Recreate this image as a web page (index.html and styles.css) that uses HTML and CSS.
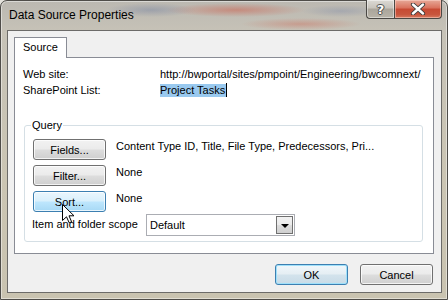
FILE: index.html
```html
<!DOCTYPE html>
<html lang="en">
<head>
  <meta charset="UTF-8" />
  <title>Data Source Properties</title>
  <link rel="stylesheet" href="styles.css">
</head>
<body>
  <div class="window">
    <div class="titlebar">
      <span class="title">Data Source Properties</span>
      <div class="caption-buttons">
        <div class="cap help">?</div>
        <div class="cap close">
          <svg width="16" height="12" viewBox="0 0 16 12">
            <path d="M3 1.5 L13 10.5 M13 1.5 L3 10.5" stroke="#3a3a3a" stroke-width="4.2" stroke-linecap="round" />
            <path d="M3 1.5 L13 10.5 M13 1.5 L3 10.5" stroke="#fff" stroke-width="2.4" stroke-linecap="round" />
          </svg>
        </div>
      </div>
    </div>

    <div class="client">
      <div class="tabs">
        <div class="tab">Source</div>
      </div>
      <div class="panel">
        <div class="prop">
          <span class="key">Web site:</span>
          <span class="val">http://bwportal/sites/pmpoint/Engineering/bwcomnext/</span>
        </div>
        <div class="prop">
          <span class="key">SharePoint List:</span>
          <span class="val"><span class="selected">Project Tasks</span><span class="caret"></span></span>
        </div>

        <fieldset class="query">
          <legend>Query</legend>
          <div class="qrow">
            <button class="btn">Fields...</button>
            <span class="qtext">Content Type ID, Title, File Type, Predecessors, Pri...</span>
          </div>
          <div class="qrow">
            <button class="btn">Filter...</button>
            <span class="qtext">None</span>
          </div>
          <div class="qrow">
            <button class="btn hover">Sort...</button>
            <span class="qtext">None</span>
          </div>
          <div class="scope">
            <span class="scope-label">Item and folder scope</span>
            <div class="combo">
              <span class="combo-text">Default</span>
              <span class="combo-arrow"></span>
            </div>
          </div>
        </fieldset>
      </div>

      <div class="actions">
        <button class="btn default">OK</button>
        <button class="btn">Cancel</button>
      </div>
    </div>

    <!-- mouse pointer over the Sort button -->
    <svg class="pointer" width="13" height="20" viewBox="0 0 13 20">
      <path d="M0.5 0.5 L0.5 16.5 L4.5 12.8 L7.2 18.8 L9.6 17.8 L7 11.8 L12 11.8 Z" fill="#fff" stroke="#000" stroke-width="1" stroke-linejoin="round" />
    </svg>
  </div>
</body>
</html>
```

FILE: styles.css
```css
* {
  box-sizing: border-box;
}
body {
  margin: 0;
  width: 448px;
  height: 300px;
  overflow: hidden;
  background: #e4e2dc;
  font-family: "Liberation Sans", Arial, sans-serif;
  font-size: 11px;
  color: #000;
}
.window {
  position: relative;
  width: 448px;
  height: 300px;
  display: flex;
  flex-direction: column;
  padding: 0 5px 6px 6px;
  border: 1px solid #4f4d49;
  border-radius: 7px 7px 0 0;
  background:
    radial-gradient(ellipse 70px 7px at 235px 9px, rgba(205, 80, 60, 0.45), transparent),
    radial-gradient(ellipse 60px 6px at 300px 23px, rgba(205, 90, 70, 0.35), transparent),
    radial-gradient(ellipse 45px 7px at 150px 9px, rgba(80, 100, 150, 0.3), transparent),
    radial-gradient(ellipse 40px 6px at 340px 10px, rgba(90, 110, 160, 0.25), transparent),
    linear-gradient(#bbb8b1, #c6c2b7 30px, #cbc5b3 60%, #c9c3b0);
  box-shadow: inset 0 0 0 1px rgba(255, 255, 255, 0.45);
}
.titlebar {
  height: 29px;
  display: flex;
  justify-content: space-between;
  align-items: flex-start;
}
.title {
  padding: 6px 0 0 2px;
  line-height: 16px;
  font-size: 12px;
  color: #000;
}
.caption-buttons {
  display: flex;
  margin: -1px 0 0 0;
}
.cap {
  height: 19px;
  display: flex;
  align-items: center;
  justify-content: center;
  border: 1px solid #4a4844;
  border-top: none;
}
.help {
  width: 28px;
  border-radius: 0 0 0 4px;
  border-right: none;
  background: linear-gradient(#dcdad5, #c7c3bb 45%, #aaa59b 50%, #b8b3a8);
  font-family: "DejaVu Sans", sans-serif;
  font-weight: bold;
  font-size: 13px;
  color: #fff;
  text-shadow: 0 0 1px #333, 1px 0 0 #555, -1px 0 0 #555, 0 1px 0 #555, 0 -1px 0 #555;
  box-shadow: inset 0 0 0 1px rgba(255, 255, 255, 0.45);
}
.close {
  width: 48px;
  border-radius: 0 0 4px 0;
  background: linear-gradient(#e7a998, #d9715c 45%, #c74a33 50%, #c8553d 80%, #d77a5f);
  box-shadow: inset 0 0 0 1px rgba(255, 220, 210, 0.5);
}
.client {
  flex: 1;
  display: flex;
  flex-direction: column;
  border: 1px solid #6c6b69;
  background: #f0f0f0;
  padding: 6px 7px 0 6px;
}
.tabs {
  display: flex;
  height: 20px;
}
.tab {
  position: relative;
  z-index: 1;
  height: 21px;
  padding: 0 8px;
  line-height: 19px;
  background: #fff;
  border: 1px solid #898c95;
  border-bottom: none;
}
.panel {
  height: 197px;
  background: #fff;
  border: 1px solid #898c95;
  padding: 8px 10px 0 8px;
}
.prop {
  display: flex;
  line-height: 16px;
  height: 16px;
}
.key {
  flex: none;
  width: 137px;
}
.val {
  display: flex;
  align-items: center;
  white-space: nowrap;
}
.selected {
  background: #99c9ef;
  line-height: 13px;
  padding-right: 1px;
}
.caret {
  width: 1px;
  height: 14px;
  background: #000;
}
.query {
  margin: 20px 0 0 1px;
  padding: 0 0 5px 8px;
  border: 1px solid #d5dfe5;
  border-radius: 3px;
  min-inline-size: 0;
}
.query legend {
  padding: 0 1px;
  margin-left: -2px;
  line-height: 14px;
}
.qrow {
  display: flex;
  align-items: flex-start;
  gap: 10px;
  margin-top: 5px;
}
.qrow:first-of-type {
  margin-top: 7px;
}
.qtext {
  line-height: 14px;
  white-space: nowrap;
}
.btn {
  width: 73px;
  height: 21px;
  padding: 0;
  font: inherit;
  color: #000;
  border: 1px solid #707070;
  border-radius: 3px;
  background: linear-gradient(#f2f2f2, #ebebeb 48%, #dddddd 52%, #cfcfcf);
  box-shadow: inset 0 0 0 1px rgba(255, 255, 255, 0.75);
}
.btn.hover {
  border-color: #3c7fb1;
  background: linear-gradient(#eaf6fd, #d9f0fc 48%, #bee6fd 52%, #a7d9f5);
}
.btn.default {
  border-color: #3c7fb1;
  background: linear-gradient(#f0f7fb, #e5eef3 48%, #d3e3ec 52%, #c8dbe7);
  box-shadow: inset 0 0 0 1px #9fe0fa;
}
.scope {
  display: flex;
  align-items: center;
  margin-top: 2px;
  margin-left: -1px;
}
.scope-label {
  flex: none;
  width: 114px;
  line-height: 14px;
  margin-top: -3px;
  white-space: nowrap;
}
.combo {
  width: 149px;
  height: 22px;
  display: flex;
  align-items: center;
  justify-content: space-between;
  border: 1px solid #abadb3;
  background: #fff;
  padding: 0 1px 0 3px;
}
.combo-arrow {
  width: 17px;
  height: 18px;
  border: 1px solid #707070;
  background: linear-gradient(#f2f2f2, #ebebeb 48%, #dddddd 52%, #cfcfcf);
  display: flex;
  align-items: center;
  justify-content: center;
}
.combo-arrow::after {
  content: "";
  border-left: 4px solid transparent;
  border-right: 4px solid transparent;
  border-top: 4px solid #000;
  margin-top: 1px;
}
.actions {
  display: flex;
  justify-content: flex-end;
  gap: 12px;
  margin: 10px 1px 0 0;
}
.pointer {
  position: absolute;
  left: 61px;
  top: 203px;
}
```
